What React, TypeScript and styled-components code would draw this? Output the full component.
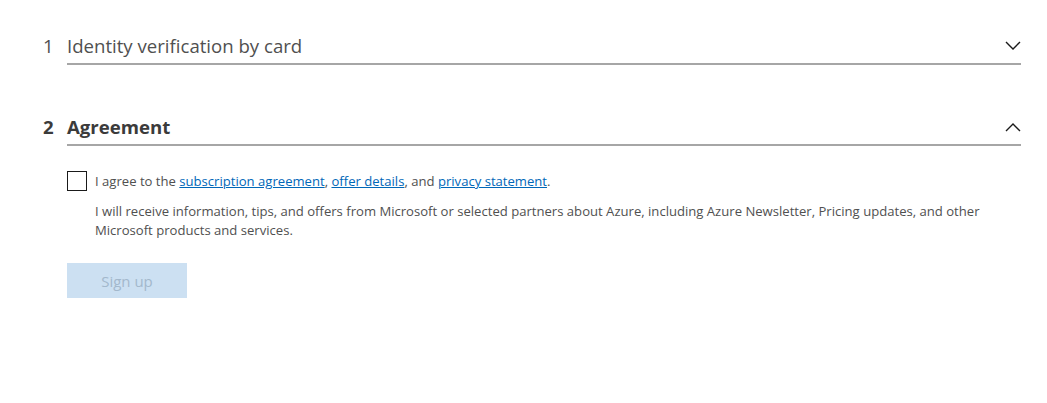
import styled, { createGlobalStyle } from "styled-components";

const GlobalStyle = createGlobalStyle`
  body {
    margin: 0;
    background: #ffffff;
    font-family: "Open Sans", "Noto Sans", sans-serif;
    color: #505050;
  }
`;

function Chevron({ up }: { up?: boolean }) {
  return (
    <svg width="16" height="10" viewBox="0 0 16 10" fill="none">
      <path
        d={up ? "M1 9 L8 2 L15 9" : "M1 1 L8 8 L15 1"}
        stroke="#1a1a1a"
        strokeWidth="1.4"
      />
    </svg>
  );
}

function App() {
  return (
    <Page>
      <GlobalStyle />
      <Section>
        <Header>
          <StepNumber>1</StepNumber>
          <HeaderBar>
            <Title>Identity verification by card</Title>
            <Chevron />
          </HeaderBar>
        </Header>
      </Section>

      <Section>
        <Header>
          <StepNumber $active>2</StepNumber>
          <HeaderBar>
            <Title $active>Agreement</Title>
            <Chevron up />
          </HeaderBar>
        </Header>
        <Body>
          <CheckRow>
            <Checkbox type="checkbox" />
            <AgreeText>
              I agree to the <Link href="#">subscription agreement</Link>,{" "}
              <Link href="#">offer details</Link>, and{" "}
              <Link href="#">privacy statement</Link>.
            </AgreeText>
          </CheckRow>
          <Note>
            I will receive information, tips, and offers from Microsoft or
            selected partners about Azure, including Azure Newsletter, Pricing
            updates, and other Microsoft products and services.
          </Note>
          <SignUpButton disabled>Sign up</SignUpButton>
        </Body>
      </Section>
    </Page>
  );
}

export default App;

const Page = styled.div`
  padding: 30px 26px 0 43px;
`;

const Section = styled.section`
  margin-bottom: 46px;
`;

const Header = styled.div`
  display: flex;
  align-items: stretch;
`;

const StepNumber = styled.div<{ $active?: boolean }>`
  width: 24px;
  font-size: 18.6px;
  line-height: 32px;
  font-weight: ${(p) => (p.$active ? 700 : 400)};
  color: ${(p) => (p.$active ? "#3b3b3b" : "#505050")};
`;

const HeaderBar = styled.div`
  flex: 1;
  display: flex;
  align-items: center;
  justify-content: space-between;
  border-bottom: 2px solid #a6a6a6;
  padding-bottom: 1px;
`;

const Title = styled.h2<{ $active?: boolean }>`
  margin: 0;
  font-size: 18.6px;
  line-height: 32px;
  font-weight: ${(p) => (p.$active ? 700 : 400)};
  color: ${(p) => (p.$active ? "#3b3b3b" : "#505050")};
`;

const Body = styled.div`
  padding: 25px 0 0 24px;
`;

const CheckRow = styled.label`
  display: flex;
  align-items: center;
  gap: 8px;
`;

const Checkbox = styled.input`
  appearance: none;
  margin: 0;
  width: 20px;
  height: 20px;
  border: 1px solid #1a1a1a;
  background: #ffffff;
  flex-shrink: 0;
`;

const AgreeText = styled.span`
  font-size: 13.1px;
  line-height: 20px;
  color: #505050;
`;

const Link = styled.a`
  color: #0067b8;
  text-decoration: underline;
`;

const Note = styled.p`
  margin: 11px 0 0 28px;
  font-size: 13.1px;
  line-height: 19px;
  color: #505050;
`;

const SignUpButton = styled.button`
  margin-top: 23px;
  width: 120px;
  height: 35px;
  border: none;
  background: #cce0f2;
  color: #a3b8cc;
  font-family: inherit;
  font-size: 15px;
`;
